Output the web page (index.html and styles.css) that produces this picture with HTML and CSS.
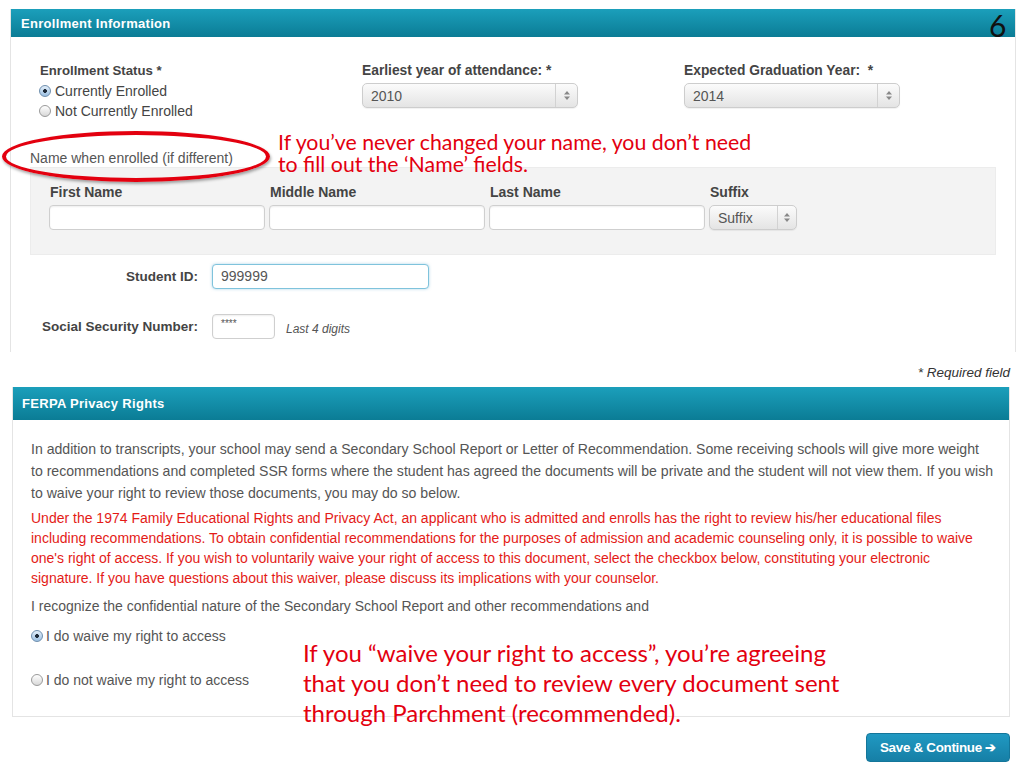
FILE: index.html
```html
<!DOCTYPE html>
<html lang="en">
<head>
  <meta charset="UTF-8">
  <meta name="viewport" content="width=device-width, initial-scale=1.0">
  <title>Enrollment Information</title>
  <link rel="stylesheet" href="styles.css">
</head>
<body>
<div class="page">

  <div class="slide-num">6</div>

  <div class="panel enroll">
    <div class="panel-head">Enrollment Information</div>

    <div class="status-row">
      <div class="col">
        <div class="label">Enrollment Status *</div>
        <div class="radio-line first"><span class="radio on"></span>Currently Enrolled</div>
        <div class="radio-line"><span class="radio"></span>Not Currently Enrolled</div>
      </div>
      <div class="col">
        <div class="label">Earliest year of attendance: *</div>
        <div class="select wide"><span>2010</span><span class="arrows"><svg width="6" height="9" viewBox="0 0 6 9"><path d="M3 0L6 3.5H0z M3 9L0 5.5H6z" fill="#888"/></svg></span></div>
      </div>
      <div class="col">
        <div class="label">Expected Graduation Year:&nbsp; *</div>
        <div class="select wide"><span>2014</span><span class="arrows"><svg width="6" height="9" viewBox="0 0 6 9"><path d="M3 0L6 3.5H0z M3 9L0 5.5H6z" fill="#888"/></svg></span></div>
      </div>
    </div>

    <div class="name-note">Name when enrolled (if different)</div>

    <div class="name-box">
      <div class="field">
        <div class="label">First Name</div>
        <div class="input"></div>
      </div>
      <div class="field">
        <div class="label">Middle Name</div>
        <div class="input"></div>
      </div>
      <div class="field">
        <div class="label">Last Name</div>
        <div class="input"></div>
      </div>
      <div class="field">
        <div class="label">Suffix</div>
        <div class="select small"><span>Suffix</span><span class="arrows"><svg width="6" height="9" viewBox="0 0 6 9"><path d="M3 0L6 3.5H0z M3 9L0 5.5H6z" fill="#888"/></svg></span></div>
      </div>
    </div>

    <div class="id-row">
      <div class="row-label">Student ID:</div>
      <div class="input focus">999999</div>
    </div>

    <div class="id-row ssn">
      <div class="row-label">Social Security Number:</div>
      <div class="input short">****</div>
      <div class="hint">Last 4 digits</div>
    </div>
  </div>

  <div class="req">* Required field</div>

  <div class="panel ferpa">
    <div class="panel-head tall">FERPA Privacy Rights</div>
    <div class="ferpa-body">
      <p class="intro">In addition to transcripts, your school may send a Secondary School Report or Letter of Recommendation. Some receiving schools will give more weight<br>to recommendations and completed SSR forms where the student has agreed the documents will be private and the student will not view them. If you wish<br>to waive your right to review those documents, you may do so below.</p>
      <p class="legal">Under the 1974 Family Educational Rights and Privacy Act, an applicant who is admitted and enrolls has the right to review his/her educational files<br>including recommendations. To obtain confidential recommendations for the purposes of admission and academic counseling only, it is possible to waive<br>one's right of access. If you wish to voluntarily waive your right of access to this document, select the checkbox below, constituting your electronic<br>signature. If you have questions about this waiver, please discuss its implications with your counselor.</p>
      <p class="recognize">I recognize the confidential nature of the Secondary School Report and other recommendations and</p>
      <div class="waive"><span class="radio on"></span>I do waive my right to access</div>
      <div class="waive second"><span class="radio"></span>I do not waive my right to access</div>
    </div>
  </div>

  <div class="actions">
    <button class="save">Save &amp; Continue &#10132;</button>
  </div>

  <!-- slide annotations -->
  <div class="circle"></div>
  <div class="note note-name">If you’ve never changed your name, you don’t need<br>to fill out the ‘Name’ fields.</div>
  <div class="note note-waive">If you “waive your right to access”, you’re agreeing<br>that you don’t need to review every document sent<br>through Parchment (recommended).</div>

</div>
</body>
</html>
```

FILE: styles.css
```css
body {
  margin: 0;
  background: #fff;
  font-family: "Liberation Sans", Arial, sans-serif;
  color: #555;
}
.page {
  position: relative;
  width: 1024px;
  height: 768px;
  overflow: hidden;
}
.slide-num {
  position: absolute;
  top: 7px;
  left: 989px;
  font-family: Lato, sans-serif;
  font-size: 30px;
  line-height: 36px;
  color: #111;
  z-index: 2;
}

/* panels */
.panel {
  border-left: 1px solid #e4e4e4;
  border-right: 1px solid #e4e4e4;
}
.enroll {
  margin: 9px 8px 0 10px;
  padding-bottom: 13px;
}
.panel-head {
  height: 28px;
  line-height: 29px;
  padding-left: 10px;
  background: linear-gradient(#1b9fbb, #0b7c95);
  color: #fff;
  font-weight: bold;
  font-size: 13px;
  letter-spacing: 0.3px;
}
.panel-head.tall {
  height: 33px;
  line-height: 33px;
}
.label {
  font-size: 13.2px;
  font-weight: bold;
  color: #444;
  line-height: 16px;
}

/* enrollment status row */
.status-row {
  display: flex;
  padding: 26px 0 0 29px;
}
.col {
  width: 322px;
}
.col + .col .label {
  font-size: 13.8px;
}
.radio-line {
  display: flex;
  align-items: center;
  height: 20px;
  font-size: 14px;
  color: #444;
}
.radio-line.first {
  margin-top: 2px;
}
.radio {
  display: inline-block;
  box-sizing: border-box;
  width: 12px;
  height: 12px;
  margin: 0 4px 0 -1px;
  border-radius: 50%;
  border: 1px solid #9a9a9a;
  background: linear-gradient(#fff, #d8d8d8);
}
.radio.on {
  border-color: #6f8fae;
  background: radial-gradient(circle, #1e2a38 0 1.6px, transparent 2.2px), linear-gradient(#e2eef9, #9cc0e2);
}

/* selects */
.select {
  display: flex;
  align-items: center;
  justify-content: space-between;
  box-sizing: border-box;
  height: 25px;
  margin-top: 4px;
  border: 1px solid #cdcdcd;
  border-radius: 5px;
  background: linear-gradient(#fbfbfb, #e4e4e4);
  font-size: 14px;
  color: #555;
  padding-left: 8px;
  box-shadow: 0 1px 1px rgba(0,0,0,0.06);
}
.select.wide {
  width: 216px;
}
.select.small {
  width: 88px;
  margin-top: 5px;
}
.arrows {
  display: flex;
  align-items: center;
  justify-content: center;
  width: 21px;
  height: 100%;
  border-left: 1px solid #d2d2d2;
}
.select.small .arrows {
  width: 18px;
}

/* previous name */
.name-note {
  margin: 29px 0 0 19px;
  font-size: 14px;
  line-height: 16px;
  color: #555;
}
.name-box {
  display: flex;
  gap: 4px;
  margin: 1px 19px 0 19px;
  padding: 16px 0 24px 18px;
  background: #f3f3f3;
  border: 1px solid #ececec;
}
.field {
  width: 216px;
}
.field .label {
  padding-left: 1px;
  font-size: 14px;
}
.input {
  box-sizing: border-box;
  height: 25px;
  margin-top: 5px;
  border: 1px solid #cfcfcf;
  border-radius: 4px;
  background: #fff;
  box-shadow: inset 0 1px 2px rgba(0,0,0,0.07);
  font-size: 14px;
  color: #555;
  padding: 3px 8px;
}

/* id rows */
.id-row {
  display: flex;
  align-items: center;
  margin-top: 9px;
}
.id-row.ssn {
  margin-top: 25px;
}
.row-label {
  width: 187px;
  text-align: right;
  font-size: 13.5px;
  font-weight: bold;
  color: #444;
  margin-right: 14px;
}
.id-row .input {
  margin-top: 0;
}
.input.focus {
  width: 217px;
  border-color: #7fc3dc;
  box-shadow: 0 0 3px rgba(90,170,210,0.5);
}
.input.short {
  width: 63px;
  font-size: 10px;
  padding-top: 3px;
  line-height: 12px;
}
.hint {
  margin-left: 11px;
  font-size: 12px;
  font-style: italic;
  color: #555;
  padding-top: 5px;
}

.req {
  margin: 14px 14px 0 0;
  text-align: right;
  font-size: 13.5px;
  font-style: italic;
  line-height: 14px;
  color: #333;
}

/* ferpa */
.ferpa {
  margin: 7px 14px 0 12px;
  border-bottom: 1px solid #e4e4e4;
}
.ferpa .panel-head {
  padding-left: 9px;
}
.ferpa-body {
  padding: 18px 10px 26px 18px;
}
.ferpa-body p {
  margin: 0;
  white-space: nowrap;
}
.intro {
  font-size: 14.1px;
  line-height: 22px;
  color: #555;
}
.legal {
  margin-top: 4px !important;
  font-size: 14px;
  line-height: 20px;
  color: #e41b17;
}
.recognize {
  margin-top: 8px !important;
  font-size: 14px;
  line-height: 20px;
}
.waive {
  display: flex;
  align-items: center;
  height: 20px;
  margin-top: 10px;
  font-size: 14px;
  color: #555;
}
.waive .radio {
  margin: 0 3px 0 0;
}
.waive.second {
  margin-top: 24px;
}

.actions {
  display: flex;
  justify-content: flex-end;
  margin: 16px 14px 0 0;
}
.save {
  height: 29px;
  width: 144px;
  border: 1px solid #14769a;
  border-radius: 4px;
  background: linear-gradient(#2099c2, #167fa6);
  color: #fff;
  font-family: "Liberation Sans", Arial, sans-serif;
  font-weight: bold;
  font-size: 13.4px;
  letter-spacing: -0.3px;
}

/* annotations over the screenshot */
.circle {
  position: absolute;
  left: 2px;
  top: 131px;
  width: 268px;
  height: 51px;
  box-sizing: border-box;
  border: 4px solid #e3000f;
  border-radius: 50%;
  box-shadow: 1px 2px 3px rgba(0,0,0,0.35);
}
.note {
  position: absolute;
  font-family: Lato, sans-serif;
  color: #e3000f;
}
.note-name {
  left: 278px;
  top: 131px;
  font-size: 21.3px;
  line-height: 22px;
}
.note-waive {
  left: 303px;
  top: 638px;
  font-size: 24px;
  line-height: 30px;
}
```
